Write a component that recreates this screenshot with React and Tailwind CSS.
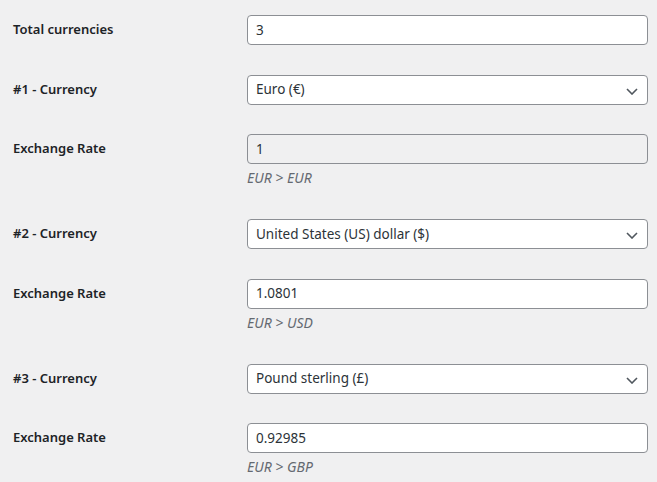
import React from 'react';

const rows = [
  { label: 'Total currencies', type: 'input', value: '3' },
  { label: '#1 - Currency', type: 'select', value: 'Euro (€)' },
  { label: 'Exchange Rate', type: 'input', value: '1', readOnly: true, desc: 'EUR > EUR' },
  { label: '#2 - Currency', type: 'select', value: 'United States (US) dollar ($)' },
  { label: 'Exchange Rate', type: 'input', value: '1.0801', desc: 'EUR > USD' },
  { label: '#3 - Currency', type: 'select', value: 'Pound sterling (£)' },
  { label: 'Exchange Rate', type: 'input', value: '0.92985', desc: 'EUR > GBP' },
];

const Chevron = () => (
  <svg className="absolute right-[9px] top-[12px] w-[12px] h-[7px]" viewBox="0 0 12 7" fill="none">
    <path d="M1 1l5 5 5-5" stroke="#50575e" strokeWidth="1.6" />
  </svg>
);

const Field = ({ row }) => {
  const box = `h-[30px] w-[401px] rounded-[4px] border border-[#8c8f94] px-[8px] flex items-center text-[13.5px] ${
    row.readOnly ? 'bg-[#f0f0f1] text-[#2c3338]' : 'bg-white text-[#2c3338]'
  }`;
  return (
    <div className="pt-[15px] pb-[14.5px]">
      <div className={`relative ${box}`}>
        <span>{row.value}</span>
        {row.type === 'select' && <Chevron />}
      </div>
      {row.desc && (
        <p className="mt-[4px] h-[21.5px] leading-[20px] text-[14px] italic text-[#646970]">{row.desc}</p>
      )}
    </div>
  );
};

export default function App() {
  return (
    <div
      className="w-[657px] h-[482px] overflow-hidden bg-[#f0f0f1] text-[#1d2327]"
      style={{ fontFamily: '"Noto Sans", "Open Sans", sans-serif' }}
    >
      <div className="pl-[13px]">
        {rows.map((row, i) => (
          <div key={i} className="flex items-start">
            <div className="w-[234px] pt-[20px] text-[13px] font-semibold leading-[18px]">{row.label}</div>
            <Field row={row} />
          </div>
        ))}
      </div>
    </div>
  );
}
